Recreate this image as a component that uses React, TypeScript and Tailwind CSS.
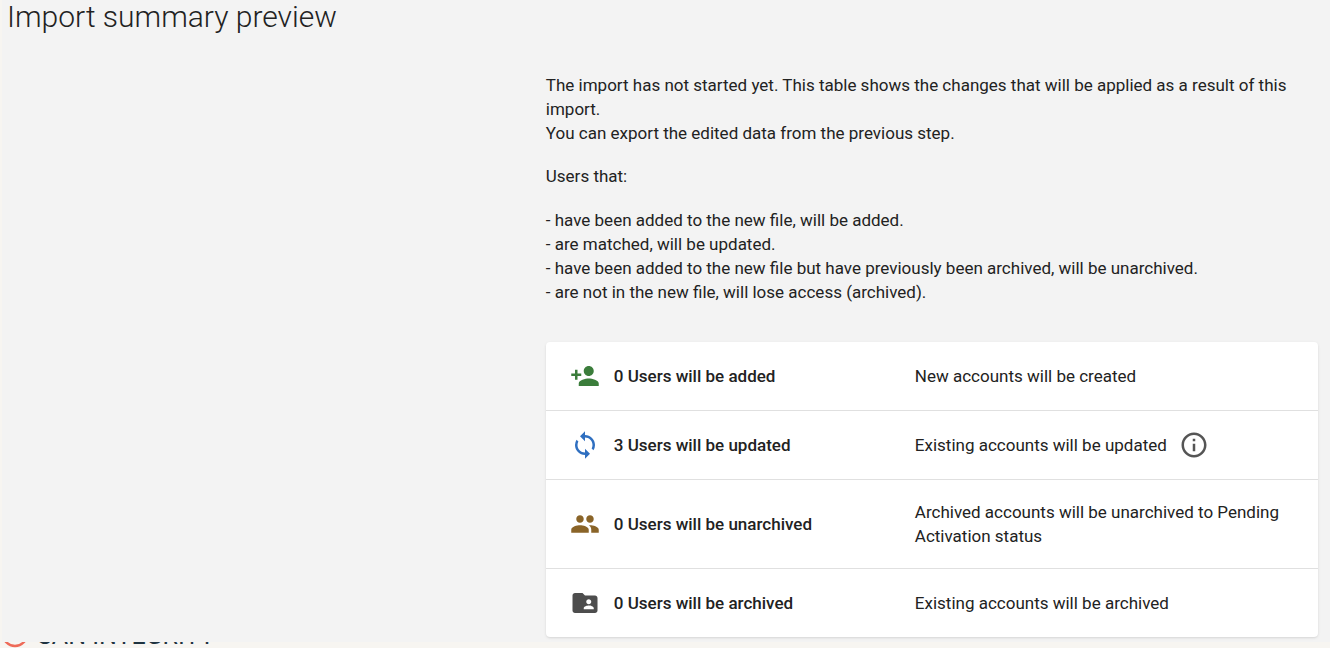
import type { ReactNode } from "react";
import { MdFolderShared, MdGroup, MdInfoOutline, MdPersonAddAlt1, MdSync } from "react-icons/md";

type SummaryRow = {
  label: string;
  description: string;
  icon: ReactNode;
  info?: boolean;
};

const rows: SummaryRow[] = [
  {
    label: "0 Users will be added",
    description: "New accounts will be created",
    icon: <MdPersonAddAlt1 className="size-[30px] -scale-x-100 text-[#3b7d3b]" />,
  },
  {
    label: "3 Users will be updated",
    description: "Existing accounts will be updated",
    icon: <MdSync className="size-[30px] text-[#2f6fc0]" />,
    info: true,
  },
  {
    label: "0 Users will be unarchived",
    description: "Archived accounts will be unarchived to Pending Activation status",
    icon: <MdGroup className="size-[30px] text-[#8a6428]" />,
  },
  {
    label: "0 Users will be archived",
    description: "Existing accounts will be archived",
    icon: <MdFolderShared className="size-[30px] text-[#4d4d4d]" />,
  },
];

export default function App() {
  return (
    <div className="min-h-screen bg-[#f7f5f1] pl-0.5 font-[Roboto,sans-serif] text-[#222222]">
      <main className="bg-[#f3f3f3] pr-3 pb-[5px] pl-[5px]">
        <h1 className="text-3xl leading-[34px] font-light">Import summary preview</h1>

        <div className="ml-[41.1%] pt-[39px]">
          <div className="text-[17px] leading-6">
            <p>
              The import has not started yet. This table shows the changes that will be applied as a result of this
              import.
            </p>
            <p>You can export the edited data from the previous step.</p>
            <p className="mt-[19px]">Users that:</p>
            <ul className="mt-5">
              <li>- have been added to the new file, will be added.</li>
              <li>- are matched, will be updated.</li>
              <li>- have been added to the new file but have previously been archived, will be unarchived.</li>
              <li>- are not in the new file, will lose access (archived).</li>
            </ul>
          </div>

          <table className="mt-[38px] w-full rounded bg-white text-[17px] leading-6 shadow-sm">
            <tbody>
              {rows.map((row) => (
                <tr key={row.label} className="border-b border-[#e0e0e0] last:border-b-0">
                  <th scope="row" className="w-[369px] py-[19px] pl-6 text-left font-medium">
                    <div className="flex items-center gap-3.5">
                      {row.icon}
                      {row.label}
                    </div>
                  </th>
                  <td className="py-5 pr-6">
                    <div className="flex items-center gap-3">
                      {row.description}
                      {row.info && (
                        <button type="button" aria-label="More information" className="-my-1">
                          <MdInfoOutline className="size-[30px] text-[#555555]" />
                        </button>
                      )}
                    </div>
                  </td>
                </tr>
              ))}
            </tbody>
          </table>
        </div>
      </main>

      {/* Only the lower edge of the brand shows below the summary panel */}
      <footer className="flex h-1.5 items-end gap-2 overflow-hidden pl-px text-[#1f3340]">
        <svg viewBox="0 0 26 26" className="size-[26px] shrink-0" fill="none" aria-hidden="true">
          <circle cx="12" cy="12" r="12" stroke="#ee6a58" strokeWidth="2.4" />
        </svg>
        <span className="text-[25px] leading-none whitespace-nowrap">SAN INTEGRITY</span>
      </footer>
    </div>
  );
}
